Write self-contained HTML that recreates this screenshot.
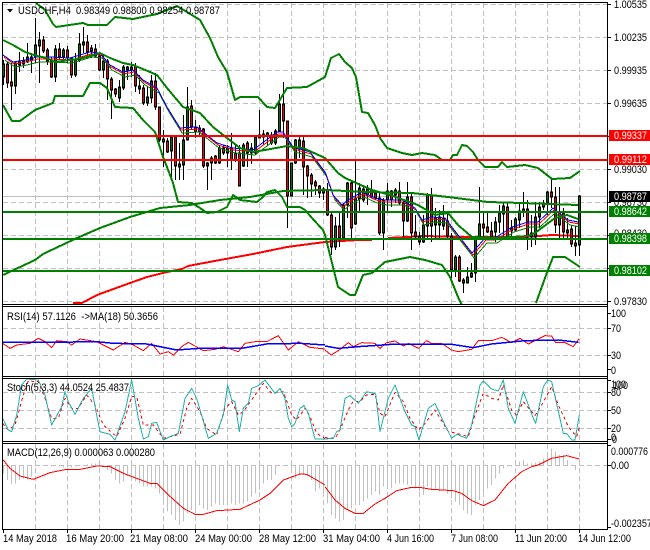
<!DOCTYPE html>
<html><head><meta charset="utf-8"><title>USDCHF,H4</title>
<style>
html,body{margin:0;padding:0;background:#fff;width:650px;height:550px;overflow:hidden}
svg{display:block}
polyline{fill:none;vector-effect:non-scaling-stroke;stroke-linejoin:round;shape-rendering:crispEdges}
text{font-family:"Liberation Sans",Arial,sans-serif;font-size:11px;fill:#000}
.grid path{stroke:#c0c0c0;stroke-width:1;fill:none;stroke-dasharray:5 3;shape-rendering:crispEdges}
.box{shape-rendering:crispEdges}
.w{fill:#fff}
</style></head><body>
<svg width="650" height="550" viewBox="0 0 650 550" xmlns="http://www.w3.org/2000/svg">
<defs>
<clipPath id="cm"><rect x="3" y="3" width="604" height="301"/></clipPath>
<clipPath id="cr"><rect x="3" y="307" width="604" height="69"/></clipPath>
<clipPath id="cs"><rect x="3" y="379" width="604" height="62"/></clipPath>
<clipPath id="cd"><rect x="3" y="444" width="604" height="85"/></clipPath>
</defs>
<rect width="650" height="550" fill="#fff"/>

<!-- grid -->
<g class="grid">
<path d="M35.5 3V304M67.5 3V304M99.5 3V304M131.5 3V304M163.5 3V304M195.5 3V304M227.5 3V304M259.5 3V304M291.5 3V304M323.5 3V304M355.5 3V304M387.5 3V304M419.5 3V304M451.5 3V304M483.5 3V304M515.5 3V304M547.5 3V304M579.5 3V304"/>
<path d="M35.5 307V376M67.5 307V376M99.5 307V376M131.5 307V376M163.5 307V376M195.5 307V376M227.5 307V376M259.5 307V376M291.5 307V376M323.5 307V376M355.5 307V376M387.5 307V376M419.5 307V376M451.5 307V376M483.5 307V376M515.5 307V376M547.5 307V376M579.5 307V376"/>
<path d="M35.5 379V441M67.5 379V441M99.5 379V441M131.5 379V441M163.5 379V441M195.5 379V441M227.5 379V441M259.5 379V441M291.5 379V441M323.5 379V441M355.5 379V441M387.5 379V441M419.5 379V441M451.5 379V441M483.5 379V441M515.5 379V441M547.5 379V441M579.5 379V441"/>
<path d="M35.5 444V529M67.5 444V529M99.5 444V529M131.5 444V529M163.5 444V529M195.5 444V529M227.5 444V529M259.5 444V529M291.5 444V529M323.5 444V529M355.5 444V529M387.5 444V529M419.5 444V529M451.5 444V529M483.5 444V529M515.5 444V529M547.5 444V529M579.5 444V529"/>
<path d="M3 4.5H607M3 37.5H607M3 70.5H607M3 103.5H607M3 136.5H607M3 169.5H607M3 202.5H607M3 235.5H607M3 268.5H607M3 301.5H607"/>
<path d="M3 328.5H607M3 355.5H607M3 392.5H607M3 410.5H607M3 428.5H607M3 465.5H607"/>
</g>
<path d="M3 196.5H607" stroke="#c0c0c0" stroke-width="1" shape-rendering="crispEdges"/>

<g clip-path="url(#cm)">
<!-- thick moving averages (under candles) -->
<polyline stroke="#ff0000" stroke-width="2" points="73,303 82,303 97,295 130,283 147,277 167,272 182,269 188,266 220,260 253,254 287,247 325,242 358,240 372,240"/>
<polyline stroke="#ff0000" stroke-width="2" points="388,238 425,236 458,237 525,237 552,235 578,236"/>

<!-- candles -->
<path fill="none" stroke="#000" stroke-width="1" shape-rendering="crispEdges" d="M3.5 60V85M7.5 62V88M11.5 63V110M15.5 62V94M19.5 52V72M23.5 57V68M27.5 43V63M31.5 53V73M35.5 18V63M39.5 32V83M43.5 36V53M47.5 48V65M51.5 57V78M55.5 45V82M59.5 43V60M63.5 48V62M67.5 46V63M71.5 57V78M75.5 53V77M79.5 33V62M83.5 27V53M87.5 35V55M91.5 45V58M95.5 44V57M99.5 53V71M103.5 55V78M107.5 59V100M111.5 77V119M115.5 88V97M119.5 80V102M123.5 65V90M127.5 66V80M131.5 62V77M135.5 63V92M139.5 75V94M143.5 85V105M147.5 87V106M151.5 75V103M155.5 73V110M159.5 107V142M163.5 130V167M167.5 138V153M171.5 135V180M175.5 135V180M179.5 143V180M183.5 115V180M187.5 87V140M191.5 100V130M195.5 120V138M199.5 125V135M203.5 128V168M207.5 162V190M211.5 156V180M215.5 155V164M219.5 145V164M223.5 145V155M227.5 145V167M231.5 133V170M235.5 145V162M239.5 145V186M243.5 143V167M247.5 141V167M251.5 143V164M255.5 135V154M259.5 110V138M263.5 130V145M267.5 132V145M271.5 132V145M275.5 129V145M279.5 94V132M283.5 82V138M287.5 121V228M291.5 163V196M295.5 139V164M299.5 135V158M303.5 135V195M307.5 165V198M311.5 173V197M315.5 180V195M319.5 185V198M323.5 187V200M327.5 183V216M331.5 213V255M335.5 217V250M339.5 213V247M343.5 203V240M347.5 182V218M351.5 182V238M355.5 160V225M359.5 183V212M363.5 185V202M367.5 185V205M371.5 180V198M375.5 190V200M379.5 193V235M383.5 198V250M387.5 183V213M391.5 190V207M395.5 188V203M399.5 182V205M403.5 200V237M407.5 182V222M411.5 193V250M415.5 215V238M419.5 232V245M423.5 215V243M427.5 193V240M431.5 188V242M435.5 208V239M439.5 210V238M443.5 205V230M447.5 212V240M451.5 233V278M455.5 255V277M459.5 255V282M463.5 278V293M467.5 267V283M471.5 263V278M475.5 237V282M479.5 187V240M483.5 213V237M487.5 213V233M491.5 222V238M495.5 217V242M499.5 205V233M503.5 202V238M507.5 202V238M511.5 220V237M515.5 217V232M519.5 202V228M523.5 192V217M527.5 200V250M531.5 215V247M535.5 202V245M539.5 202V228M543.5 200V210M547.5 191V215M551.5 178V208M555.5 187V233M559.5 187V238M563.5 208V238M567.5 218V238M571.5 226V247M575.5 226V256M579.5 195V256"/>
<g fill="none" stroke="#000" stroke-width="3" stroke-linecap="square" shape-rendering="crispEdges">
<path d="M7.5 65V82M11.5 83V85M43.5 41V50M47.5 51V60M51.5 62V76M59.5 50V56M67.5 51V57M71.5 59V74M87.5 43V51M91.5 49V50M95.5 50V55M99.5 57V69M107.5 62V78M111.5 80V89M115.5 90V93M135.5 67V85M143.5 89V102M155.5 82V106M159.5 108V139M167.5 142V151M175.5 138V165M191.5 107V126M195.5 128V131M203.5 130V165M207.5 164V165M215.5 157V162M223.5 149V152M231.5 149V159M235.5 154V159M239.5 154V185M247.5 144V152M271.5 136V142M283.5 105V120M287.5 122V195M303.5 142V166M307.5 167V175M311.5 176V183M315.5 183V185M319.5 187V192M327.5 191V214M331.5 216V246M339.5 227V237M351.5 184V227M363.5 190V199M371.5 191V196M375.5 194V197M379.5 199V232M391.5 192V199M399.5 192V202M403.5 204V220M411.5 198V232M415.5 233V236M419.5 237V241M431.5 196V225M447.5 222V235M451.5 237V269M459.5 258V280M463.5 281V282M483.5 225V227M487.5 228V231M491.5 232V236M507.5 208V236M527.5 210V236M551.5 193V196M555.5 198V224M563.5 214V231M571.5 230V243M575.5 244V245"/>
<path d="M3.5 65V76M15.5 64V85M19.5 63V64M23.5 62V63M27.5 58V61M31.5 58V59M35.5 46V56M39.5 41V45M55.5 50V76M63.5 51V56M75.5 60V74M79.5 45V59M83.5 43V44M103.5 62V69M119.5 88V97M123.5 68V87M127.5 68V69M131.5 68V69M139.5 87V88M147.5 98V102M151.5 82V97M163.5 140V141M171.5 138V150M179.5 165V166M183.5 141V164M187.5 108V139M199.5 129V131M211.5 159V162M219.5 149V162M227.5 149V152M243.5 146V165M251.5 149V152M255.5 138V152M259.5 136V137M263.5 135V136M267.5 134V135M275.5 132V142M279.5 105V130M291.5 164V195M295.5 141V162M299.5 141V148M323.5 190V192M335.5 227V246M343.5 206V237M347.5 184V204M355.5 199V223M359.5 189V198M367.5 190V194M383.5 201V232M387.5 192V199M395.5 191V194M407.5 198V220M423.5 226V241M427.5 196V225M435.5 219V224M439.5 218V224M443.5 219V225M455.5 258V269M467.5 278V282M471.5 274V276M475.5 239V272M479.5 225V238M495.5 223V231M499.5 214V221M503.5 207V213M511.5 229V230M515.5 220V229M519.5 212V219M523.5 210V211M531.5 234V236M535.5 218V236M539.5 208V216M543.5 204V206M547.5 193V202M559.5 214V224M567.5 231V232M579.5 197V244"/>
</g>
<path fill="none" stroke="#f00000" stroke-width="1" shape-rendering="crispEdges" d="M7.5 65V82M11.5 83V85M43.5 41V50M47.5 51V60M51.5 62V76M59.5 50V56M67.5 51V57M71.5 59V74M87.5 43V51M91.5 49V50M95.5 50V55M99.5 57V69M107.5 62V78M111.5 80V89M115.5 90V93M135.5 67V85M143.5 89V102M155.5 82V106M159.5 108V139M167.5 142V151M175.5 138V165M191.5 107V126M195.5 128V131M203.5 130V165M207.5 164V165M215.5 157V162M223.5 149V152M231.5 149V159M235.5 154V159M239.5 154V185M247.5 144V152M271.5 136V142M283.5 105V120M287.5 122V195M303.5 142V166M307.5 167V175M311.5 176V183M315.5 183V185M319.5 187V192M327.5 191V214M331.5 216V246M339.5 227V237M351.5 184V227M363.5 190V199M371.5 191V196M375.5 194V197M379.5 199V232M391.5 192V199M399.5 192V202M403.5 204V220M411.5 198V232M415.5 233V236M419.5 237V241M431.5 196V225M447.5 222V235M451.5 237V269M459.5 258V280M463.5 281V282M483.5 225V227M487.5 228V231M491.5 232V236M507.5 208V236M527.5 210V236M551.5 193V196M555.5 198V224M563.5 214V231M571.5 230V243M575.5 244V245"/>
<path fill="none" stroke="#0a6a0a" stroke-width="1" shape-rendering="crispEdges" d="M3.5 65V76M15.5 64V85M19.5 63V64M23.5 62V63M27.5 58V61M31.5 58V59M35.5 46V56M39.5 41V45M55.5 50V76M63.5 51V56M75.5 60V74M79.5 45V59M83.5 43V44M103.5 62V69M119.5 88V97M123.5 68V87M127.5 68V69M131.5 68V69M139.5 87V88M147.5 98V102M151.5 82V97M163.5 140V141M171.5 138V150M179.5 165V166M183.5 141V164M187.5 108V139M199.5 129V131M211.5 159V162M219.5 149V162M227.5 149V152M243.5 146V165M251.5 149V152M255.5 138V152M259.5 136V137M263.5 135V136M267.5 134V135M275.5 132V142M279.5 105V130M291.5 164V195M295.5 141V162M299.5 141V148M323.5 190V192M335.5 227V246M343.5 206V237M347.5 184V204M355.5 199V223M359.5 189V198M367.5 190V194M383.5 201V232M387.5 192V199M395.5 191V194M407.5 198V220M423.5 226V241M427.5 196V225M435.5 219V224M439.5 218V224M443.5 219V225M455.5 258V269M467.5 278V282M471.5 274V276M475.5 239V272M479.5 225V238M495.5 223V231M499.5 214V221M503.5 207V213M511.5 229V230M515.5 220V229M519.5 212V219M523.5 210V211M531.5 234V236M535.5 218V236M539.5 208V216M543.5 204V206M547.5 193V202M559.5 214V224M567.5 231V232M579.5 197V244"/>

<!-- thin MAs -->
<polyline transform="translate(2,5)" stroke="#008000" stroke-width="1" points="3,55 13,62 25,60 37,57 50,57 70,58 90,52 100,53 110,65 123,72 133,70 143,80 157,88 167,107 180,128 197,127 217,143 233,148 253,150 277,132 283,132 293,147 310,152 325,172 333,195 342,205 348,200 362,192 375,198 385,200 402,200 415,208 422,220 432,217 445,218 458,235 472,253 485,238 495,238 512,227 528,222 538,222 553,208 568,220 578,222"/>
<polyline transform="translate(1,2)" stroke="#ff0000" stroke-width="1" points="3,55 13,62 25,60 37,57 50,57 70,58 90,52 100,53 110,65 123,72 133,70 143,80 157,88 167,107 180,128 197,127 217,143 233,148 253,150 277,132 283,132 293,147 310,152 325,172 333,195 342,205 348,200 362,192 375,198 385,200 402,200 415,208 422,220 432,217 445,218 458,235 472,253 485,238 495,238 512,227 528,222 538,222 553,208 568,220 578,222"/>
<polyline stroke="#0000ff" stroke-width="1" points="3,55 13,62 25,60 37,57 50,57 70,58 90,52 100,53 110,65 123,72 133,70 143,80 157,88 167,107 180,128 197,127 217,143 233,148 253,150 277,132 283,132 293,147 310,152 325,172 333,195 342,205 348,200 362,192 375,198 385,200 402,200 415,208 422,220 432,217 445,218 458,235 472,253 485,238 495,238 512,227 528,222 538,222 553,208 568,220 578,222"/>

<!-- Bollinger bands + long MA -->
<g stroke="#008000" stroke-width="2">
<polyline points="36,3 45,10 53,24 56,27 83,23 88,25 107,25 115,17 133,19 157,14 177,6 187,12 200,20 210,38 218,57 227,72 235,100 240,97 258,97 267,107 275,108 287,88 307,87 325,77 331,58 339,54 345,62 352,68 356,77 362,112 368,113 375,125 380,138 387,148 402,153 412,155 422,153 435,155 442,160 450,160 453,155 457,155 462,145 467,146 473,152 478,160 485,167 498,167 502,162 507,167 525,165 538,168 552,179 570,178 580,171"/>
<polyline points="3,40 13,45 25,52 37,56 47,58 55,62 70,60 83,58 100,53 110,58 123,63 133,65 150,72 157,75 167,88 183,107 200,113 213,127 227,138 240,148 253,152 265,150 287,146 303,148 325,158 338,173 345,178 372,190 390,195 418,205 435,215 448,213 458,225 472,237 498,238 528,236 535,233 555,218 567,215 578,219"/>
<polyline points="3,105 12,121 20,121 35,110 53,103 55,96 83,96 90,83 100,83 107,88 115,107 133,108 143,120 155,132 163,157 167,167 173,183 178,202 192,203 200,208 207,213 217,212 227,207 233,195 240,200 257,202 263,197 267,192 275,190 282,197 287,207 300,207 305,210 312,218 323,230 325,235 333,267 338,287 350,295 355,295 363,275 372,273 385,262 410,257 425,260 442,265 450,277 458,297 462,305"/>
<polyline points="536,303 545,278 553,257 565,257 580,267"/>
<polyline points="3,275 35,260 43,254 77,238 100,228 130,217 160,208 190,205 220,200 250,197 283,191 325,190 368,192 412,193 448,197 488,202 522,203 578,205"/>
</g>

<!-- horizontal levels -->
<g shape-rendering="crispEdges" stroke-width="2" fill="none">
<path stroke="#ff0000" d="M3 136H607M3 160H607"/>
<path stroke="#008000" d="M3 212H607M3 239H607M3 271H607"/>
</g>
</g>

<!-- RSI -->
<g clip-path="url(#cr)">
<polyline stroke="#ff0000" stroke-width="1" transform="translate(0,300) scale(.33333)" points="8,130 30,145 50,135 90,130 115,115 135,125 155,143 170,122 200,125 215,135 240,117 290,125 340,150 375,127 400,135 430,152 455,130 480,162 505,155 520,165 545,140 565,127 610,152 645,148 670,140 715,155 735,130 765,125 800,125 835,107 865,150 895,125 930,142 975,147"/>
<polyline stroke="#ff0000" stroke-width="1" transform="translate(325,300) scale(.33333)" points="0,150 18,165 40,152 70,128 85,140 110,128 150,130 165,145 185,128 210,123 235,138 250,130 280,145 305,122 320,130 350,130 380,150 400,155 440,148 460,122 500,122 530,112 560,128 585,115 610,132 660,107 680,108 692,128 720,128 745,140 763,115"/>
<polyline stroke="#0000ff" stroke-width="1.5" transform="translate(0,300) scale(.33333)" points="8,127 150,127 290,125 340,130 440,132 530,150 600,145 725,145 800,132 900,130 975,135"/>
<polyline stroke="#0000ff" stroke-width="1.5" transform="translate(325,300) scale(.33333)" points="0,138 40,145 100,140 200,133 380,133 445,143 500,132 600,122 700,120 760,127"/>
</g>

<!-- Stochastic -->
<g clip-path="url(#cs)">
<polyline stroke="#ff0000" stroke-width="1" stroke-dasharray="3 3" transform="translate(0,375) scale(.33333)" points="8,145 25,165 45,150 70,60 85,18 115,20 135,70 155,130 175,130 195,70 215,100 235,100 260,60 285,90 310,150 350,185 375,130 395,65 410,65 430,150 460,150 490,190 540,178 560,100 575,70 600,110 620,160 650,180 675,100 695,80 715,120 730,110 790,25 815,55 850,50 875,120 890,135 915,100 930,125 950,175 975,190"/>
<polyline stroke="#ff0000" stroke-width="1" stroke-dasharray="3 3" transform="translate(325,375) scale(.33333)" points="0,188 30,190 45,165 70,105 85,78 105,80 125,60 150,58 165,115 180,125 210,52 235,80 255,130 280,165 300,145 330,105 370,170 395,175 430,185 450,120 475,55 500,70 520,75 535,30 560,105 575,120 595,80 630,122 650,90 680,35 700,90 730,155 755,185 763,155"/>
<polyline stroke="#20b2aa" stroke-width="1" transform="translate(0,375) scale(.33333)" points="8,130 25,165 35,170 50,120 65,30 80,12 115,15 135,60 155,150 185,95 195,50 205,80 225,118 250,70 275,40 290,120 300,170 330,178 345,195 375,110 395,15 415,130 430,192 445,185 455,145 470,142 490,195 510,185 535,175 555,70 575,40 590,70 625,190 650,175 670,120 683,30 695,75 705,80 718,170 730,100 745,85 755,40 775,32 795,15 825,55 840,40 855,70 865,130 875,155 885,145 900,100 912,92 925,115 945,192 975,192"/>
<polyline stroke="#20b2aa" stroke-width="1" transform="translate(325,375) scale(.33333)" points="0,192 25,190 35,170 45,165 60,70 75,62 100,85 125,50 152,57 165,170 190,70 210,30 240,110 260,150 270,155 282,195 310,100 330,85 360,150 380,190 395,178 425,190 440,150 465,30 475,18 500,42 520,48 535,15 550,100 570,145 595,50 625,130 632,145 655,35 668,15 680,20 715,175 725,175 740,195 750,195 763,120"/>
</g>

<!-- MACD -->
<g clip-path="url(#cd)">
<g transform="translate(0,430) scale(1,.33333)"><path fill="none" stroke="#c0c0c0" stroke-width="1" vector-effect="non-scaling-stroke" shape-rendering="crispEdges" d="M3.5 105V130M7.5 105V150M11.5 105V162M15.5 105V160M19.5 105V150M23.5 105V145M27.5 105V148M31.5 105V140M35.5 105V110M39.5 105V106M43.5 105V106M47.5 105V108M51.5 105V110M55.5 105V108M59.5 105V110M63.5 105V112M67.5 105V112M71.5 105V112M75.5 105V110M79.5 105V108M83.5 105V106M87.5 105V104M91.5 105V100M95.5 105V100M99.5 105V100M103.5 105V106M107.5 105V120M111.5 105V130M115.5 105V150M119.5 105V160M123.5 105V155M127.5 105V140M131.5 105V150M135.5 105V155M139.5 105V160M143.5 105V170M147.5 105V170M151.5 105V170M155.5 105V175M159.5 105V190M163.5 105V210M167.5 105V245M171.5 105V255M175.5 105V270M179.5 105V285M183.5 105V275M187.5 105V250M191.5 105V240M195.5 105V235M199.5 105V225M203.5 105V235M207.5 105V240M211.5 105V230M215.5 105V220M219.5 105V225M223.5 105V225M227.5 105V220M231.5 105V220M235.5 105V225M239.5 105V220M243.5 105V220M247.5 105V215M251.5 105V200M255.5 105V190M259.5 105V180M263.5 105V160M267.5 105V150M271.5 105V150M275.5 105V135M279.5 105V106M283.5 105V106M287.5 105V106M291.5 105V130M295.5 105V145M299.5 105V130M303.5 105V135M307.5 105V140M311.5 105V150M315.5 105V185M319.5 105V175M323.5 105V190M327.5 105V220M331.5 105V255M335.5 105V265M339.5 105V275M343.5 105V270M347.5 105V240M351.5 105V235M355.5 105V225M359.5 105V225M363.5 105V215M367.5 105V205M371.5 105V195M375.5 105V185M379.5 105V195M383.5 105V170M387.5 105V170M391.5 105V175M395.5 105V160M399.5 105V160M403.5 105V160M407.5 105V165M411.5 105V165M415.5 105V175M419.5 105V185M423.5 105V195M427.5 105V170M431.5 105V180M435.5 105V175M439.5 105V185M443.5 105V180M447.5 105V190M451.5 105V205M455.5 105V215M459.5 105V225M463.5 105V240M467.5 105V250M471.5 105V255M475.5 105V225M479.5 105V210M483.5 105V200M487.5 105V175M491.5 105V165M495.5 105V145M499.5 105V130M503.5 105V115M507.5 105V110M511.5 105V110M515.5 105V108M519.5 105V95M523.5 105V90M527.5 105V100M531.5 105V100M535.5 105V98M539.5 105V95M543.5 105V85M547.5 105V72M551.5 105V55M555.5 105V65M559.5 105V75M563.5 105V75M567.5 105V90M571.5 105V105M575.5 105V120"/></g>
<polyline stroke="#ff0000" stroke-width="1" transform="translate(0,430) scale(.33333)" points="8,88 30,115 60,138 100,148 150,128 200,118 240,118 290,108 330,110 370,130 410,145 450,160 470,160 500,190 550,235 585,253 610,253 650,242 720,238 780,210 810,190 850,150 900,132 920,133 950,150 975,165"/>
<polyline stroke="#ff0000" stroke-width="1" transform="translate(325,430) scale(.33333)" points="0,170 30,210 60,235 90,250 115,250 150,222 180,205 215,182 260,172 290,173 320,178 385,182 410,190 440,212 475,227 510,210 550,160 590,125 620,110 640,105 680,85 725,77 763,87"/>
</g>

<!-- frame -->
<path fill="none" stroke="#000" stroke-width="1" shape-rendering="crispEdges" d="M2.5 2.5H607.5V529.5H2.5ZM2.5 304.5H607.5M2.5 306.5H607.5M2.5 376.5H607.5M2.5 378.5H607.5M2.5 441.5H607.5M2.5 443.5H607.5"/>
<!-- ticks -->
<path fill="none" stroke="#000" stroke-width="1" shape-rendering="crispEdges" d="M607 4.5H611M607 37.5H611M607 70.5H611M607 103.5H611M607 136.5H611M607 169.5H611M607 202.5H611M607 235.5H611M607 268.5H611M607 301.5H611M607 313.5H611M607 328.5H611M607 355.5H611M607 369.5H611M607 380.5H611M607 392.5H611M607 410.5H611M607 428.5H611M607 439.5H611M607 445.5H611M607 465.5H611M607 527.5H611M3.5 529V533M67.5 529V533M131.5 529V533M195.5 529V533M259.5 529V533M323.5 529V533M387.5 529V533M451.5 529V533M515.5 529V533M579.5 529V533"/>

<!-- titles -->
<path d="M7 9H13L10 12.5Z" fill="#000"/>
<text x="18" y="14" textLength="202" lengthAdjust="spacingAndGlyphs" xml:space="preserve" style="white-space:pre">USDCHF,H4  0.98349 0.98800 0.98254 0.98787</text>
<text x="7" y="320" textLength="151" lengthAdjust="spacingAndGlyphs" xml:space="preserve" style="white-space:pre">RSI(14) 57.1126  -&gt;MA(18) 50.3656</text>
<text x="7" y="391" textLength="122" lengthAdjust="spacingAndGlyphs">Stoch(5,3,3) 44.0524 25.4837</text>
<text x="7" y="456" textLength="148" lengthAdjust="spacingAndGlyphs">MACD(12,26,9) 0.000063 0.000280</text>

<!-- price axis -->
<g>
<text x="614" y="8" textLength="33" lengthAdjust="spacingAndGlyphs">1.00535</text>
<text x="614" y="41" textLength="33" lengthAdjust="spacingAndGlyphs">1.00235</text>
<text x="614" y="74" textLength="33" lengthAdjust="spacingAndGlyphs">0.99935</text>
<text x="614" y="107" textLength="33" lengthAdjust="spacingAndGlyphs">0.99635</text>
<text x="614" y="173" textLength="33" lengthAdjust="spacingAndGlyphs">0.99030</text>
<text x="614" y="206" textLength="33" lengthAdjust="spacingAndGlyphs">0.98730</text>
<text x="614" y="237" textLength="33" lengthAdjust="spacingAndGlyphs">0.98430</text>
<text x="614" y="305" textLength="33" lengthAdjust="spacingAndGlyphs">0.97830</text>
</g>
<rect class="box" x="609" y="130" width="41" height="11" fill="#ff0000"/>
<text class="w" x="614" y="139" textLength="33" lengthAdjust="spacingAndGlyphs">0.99337</text>
<rect class="box" x="609" y="154" width="41" height="11" fill="#ff0000"/>
<text class="w" x="614" y="163" textLength="33" lengthAdjust="spacingAndGlyphs">0.99112</text>
<rect class="box" x="609" y="191" width="41" height="11" fill="#000"/>
<text class="w" x="614" y="200" textLength="33" lengthAdjust="spacingAndGlyphs">0.98787</text>
<rect class="box" x="609" y="206" width="41" height="11" fill="#008000"/>
<text class="w" x="614" y="215" textLength="33" lengthAdjust="spacingAndGlyphs">0.98642</text>
<rect class="box" x="609" y="233" width="41" height="11" fill="#008000"/>
<text class="w" x="614" y="242" textLength="33" lengthAdjust="spacingAndGlyphs">0.98398</text>
<rect class="box" x="609" y="265" width="41" height="11" fill="#008000"/>
<text class="w" x="614" y="274" textLength="33" lengthAdjust="spacingAndGlyphs">0.98102</text>

<!-- RSI axis -->
<text x="611" y="317" textLength="15" lengthAdjust="spacingAndGlyphs">100</text>
<text x="611" y="332" textLength="10" lengthAdjust="spacingAndGlyphs">70</text>
<text x="611" y="359" textLength="10" lengthAdjust="spacingAndGlyphs">30</text>
<text x="611" y="374" textLength="5" lengthAdjust="spacingAndGlyphs">0</text>
<!-- Stoch axis -->
<text x="611" y="388" textLength="15" lengthAdjust="spacingAndGlyphs">100</text>
<text x="613" y="389" textLength="15" lengthAdjust="spacingAndGlyphs">100</text>
<text x="611" y="396" textLength="10" lengthAdjust="spacingAndGlyphs">80</text>
<text x="611" y="414" textLength="10" lengthAdjust="spacingAndGlyphs">50</text>
<text x="611" y="432" textLength="10" lengthAdjust="spacingAndGlyphs">20</text>
<text x="611" y="441" textLength="5" lengthAdjust="spacingAndGlyphs">0</text>
<text x="612" y="443" textLength="5" lengthAdjust="spacingAndGlyphs">0</text>
<!-- MACD axis -->
<text x="611" y="455" textLength="37" lengthAdjust="spacingAndGlyphs">0.000776</text>
<text x="611" y="469" textLength="18" lengthAdjust="spacingAndGlyphs">0.00</text>
<text x="611" y="527" textLength="41" lengthAdjust="spacingAndGlyphs">-0.002357</text>

<!-- time axis -->
<text x="3" y="542" textLength="54" lengthAdjust="spacingAndGlyphs">14 May 2018</text>
<text x="66" y="542" textLength="58" lengthAdjust="spacingAndGlyphs">16 May 20:00</text>
<text x="130" y="542" textLength="58" lengthAdjust="spacingAndGlyphs">21 May 08:00</text>
<text x="195" y="542" textLength="57" lengthAdjust="spacingAndGlyphs">24 May 00:00</text>
<text x="259" y="542" textLength="57" lengthAdjust="spacingAndGlyphs">28 May 12:00</text>
<text x="323" y="542" textLength="57" lengthAdjust="spacingAndGlyphs">31 May 04:00</text>
<text x="387" y="542" textLength="47" lengthAdjust="spacingAndGlyphs">4 Jun 16:00</text>
<text x="451" y="542" textLength="47" lengthAdjust="spacingAndGlyphs">7 Jun 08:00</text>
<text x="515" y="542" textLength="52" lengthAdjust="spacingAndGlyphs">11 Jun 20:00</text>
<text x="578" y="542" textLength="53" lengthAdjust="spacingAndGlyphs">14 Jun 12:00</text>
</svg>
</body></html>
